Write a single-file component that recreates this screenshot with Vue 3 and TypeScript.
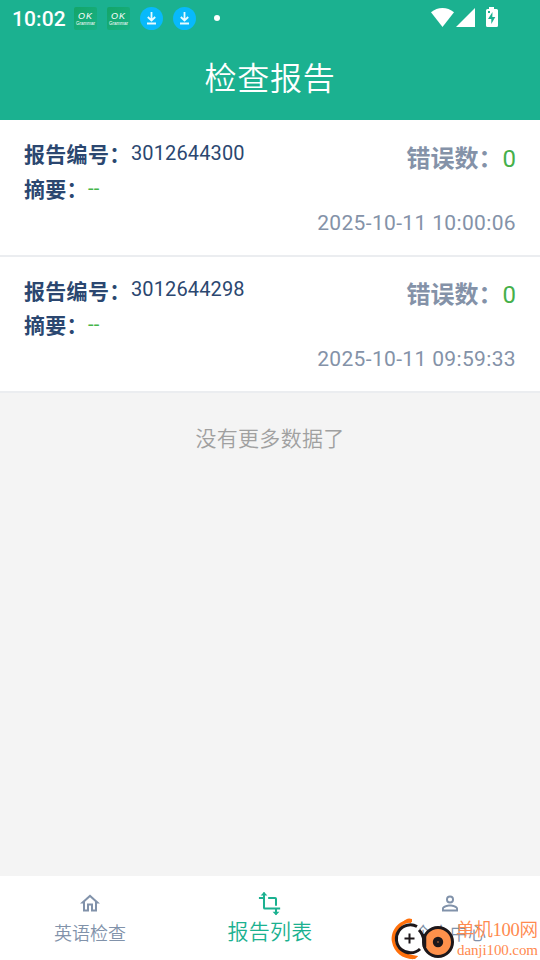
<script setup lang="ts">
interface Report {
  id: string
  summary: string
  errors: number
  time: string
}

const reports: Report[] = [
  { id: '3012644300', summary: '--', errors: 0, time: '2025-10-11 10:00:06' },
  { id: '3012644298', summary: '--', errors: 0, time: '2025-10-11 09:59:33' },
]
</script>

<template>
  <div class="screen">
    <header class="top">
      <div class="status">
        <span class="clock">10:02</span>
        <span v-for="n in 2" :key="'g' + n" class="grammar">
          <b>OK</b>
          <i>Grammar</i>
        </span>
        <svg v-for="n in 2" :key="'d' + n" class="download" viewBox="0 0 23 23">
          <circle cx="11.5" cy="11.5" r="11.5" fill="#08b9fb" />
          <path d="M11.5 5v8M7.8 10l3.7 3.5 3.7-3.5M7 16.5h9" fill="none" stroke="#e9fbff" stroke-width="1.8" />
        </svg>
        <span class="dot"></span>
        <svg class="signals" viewBox="0 0 68 22">
          <path d="M0 5.3C6.7-.4 16.3-.4 23 5.3L11.5 20Z" fill="#fff" />
          <path d="M44 1v19H25Z" fill="#fff" />
          <path d="M58 0h5v2h2.500q1.500 0 1.500 1.500v15q0 1.500-1.500 1.500h-9q-1.500 0-1.500-1.500v-15q0-1.500 1.500-1.500H58Z" fill="#fff" />
          <path d="M61.500 5l-4.500 7h3.300v5l4-7h-3ZM57 4h2v2h-2Z" fill="#1bb190" />
        </svg>
      </div>
      <h1>检查报告</h1>
    </header>

    <main>
      <article v-for="r in reports" :key="r.id" class="report">
        <div class="info">
          <p><strong>报告编号：</strong><span class="number">{{ r.id }}</span></p>
          <p><strong>摘要：</strong><span class="summary">{{ r.summary }}</span></p>
        </div>
        <div class="side">
          <p class="errors"><strong>错误数：</strong><span>{{ r.errors }}</span></p>
          <time>{{ r.time }}</time>
        </div>
      </article>
      <p class="end">没有更多数据了</p>
    </main>

    <nav>
      <a class="tab">
        <svg viewBox="0 0 24 24"><path d="M12 5.690l5 4.500V18h-2v-6H9v6H7v-7.810l5-4.500M12 3 2 12h3v8h6v-6h2v6h6v-8h3L12 3Z" /></svg>
        <span>英语检查</span>
      </a>
      <a class="tab active">
        <svg viewBox="0 0 26 26"><path d="M6.500 1v16.500q0 1 1 1H24M1 7h5.500M11 7h7.500q1 0 1 1v7.500M19.500 18.500V25" fill="none" stroke="currentColor" stroke-width="2.200" /><path d="M2.800 4.300 6.500.500l3.700 3.800ZM15.800 22l3.700 3.800 3.700-3.800Z" /></svg>
        <span>报告列表</span>
      </a>
      <a class="tab">
        <svg viewBox="0 0 24 24"><path d="M12 5.900a2.100 2.100 0 1 1 0 4.200 2.100 2.100 0 0 1 0-4.200m0 9c2.970 0 6.100 1.460 6.100 2.100v1.100H5.900V17c0-.640 3.130-2.100 6.100-2.100M12 4a4 4 0 1 0 0 8 4 4 0 0 0 0-8Zm0 9c-2.670 0-8 1.340-8 4v3h16v-3c0-2.660-5.330-4-8-4Z" /></svg>
        <span>个人中心</span>
      </a>
    </nav>

    <aside class="mark">
      <svg viewBox="0 0 66 44">
        <path d="M22 2C8 3 0 14 2 25c2 11 12 18 23 17l3-3C16 38 6 31 6 21S14 6 22 5Z" fill="#ff700b" />
        <path d="M13 5q4-5 9-3l-1 4ZM16 38l12 1q-4 5-9 2Z" fill="#ff700b" />
        <path d="M28 10A14.500 14.500 0 1 0 31 31L35 20Z" fill="#fff" />
        <path d="M27 9.500A14 14 0 1 0 30 32" fill="none" stroke="#1d171a" stroke-width="3" />
        <path d="M29 13q4 4 5 11" fill="none" stroke="#1d171a" stroke-width="3" />
        <path d="M19.500 16.500v10M14.500 21.500h10" stroke="#1d171a" stroke-width="2" />
        <circle cx="48" cy="25" r="14.500" fill="#ff914b" stroke="#1d171a" stroke-width="3" />
        <circle cx="48" cy="25" r="5.200" fill="#1d171a" />
        <circle cx="48" cy="25" r=".7" fill="#ff914b" />
        <path d="M34.500 17v13" stroke="#1d171a" stroke-width="3.500" />
      </svg>
      <div class="brand"><span>单机100网</span><small>danji100.com</small></div>
    </aside>
  </div>
</template>

<style>
body {
  margin: 0;
}
</style>

<style scoped>
.screen {
  position: relative;
  display: flex;
  flex-direction: column;
  height: 960px;
  background: #f4f4f4;
  overflow: hidden;
  font-family: Roboto, "Noto Sans CJK SC", sans-serif;
}
p, h1 {
  margin: 0;
}
.top {
  height: 120px;
  background: #1bb190;
  color: #fff;
}
.status {
  display: flex;
  align-items: center;
  height: 36px;
  padding-left: 12px;
}
.clock {
  width: 62px;
  font-size: 21px;
  font-weight: 500;
  letter-spacing: 0.1px;
  line-height: 36px;
  padding-top: 2px;
}
.grammar {
  display: flex;
  flex-direction: column;
  align-items: center;
  width: 23px;
  height: 23px;
  margin-right: 10px;
  border-radius: 2px;
  background: linear-gradient(135deg, #14a568, #18b184);
}
.grammar b {
  font: italic 9px/9px "Liberation Sans", sans-serif;
  letter-spacing: 1px;
  margin-top: 5px;
}
.grammar i {
  font: 4.500px/6px "Liberation Sans", sans-serif;
}
.download {
  width: 23px;
  height: 23px;
  margin-right: 10px;
}
.dot {
  width: 6px;
  height: 6px;
  margin-left: 8px;
  border-radius: 50%;
  background: #fff;
}
.signals {
  width: 68px;
  height: 22px;
  margin-left: 211px;
}
h1 {
  font-size: 32px;
  font-weight: 350;
  letter-spacing: 0.800px;
  line-height: 48px;
  padding-top: 19px;
  text-align: center;
}
main {
  flex: 1;
}
.report {
  display: flex;
  justify-content: space-between;
  box-sizing: border-box;
  height: 136.500px;
  padding: 17px 24px 0;
  border-bottom: 2px solid #ebedf0;
  background: #fff;
}
.info p {
  display: flex;
  height: 34.500px;
  color: #2b4770;
}
.info strong {
  font-size: 21px;
  font-weight: 700;
  letter-spacing: 0.300px;
  line-height: 36px;
}
.number {
  margin-top: -0.100px;
  padding-left: 0.500px;
  font-size: 20px;
  letter-spacing: 0.120px;
  line-height: 32px;
}
.info .summary {
  font-size: 20px;
  letter-spacing: 0.300px;
  line-height: 32px;
  color: #45b549;
}
.side {
  display: flex;
  flex-direction: column;
  align-items: flex-end;
  color: #8492a8;
}
.errors {
  display: flex;
  box-sizing: border-box;
  height: 42px;
  padding-top: 0.900px;
  line-height: 42px;
  font-size: 24px;
}
.errors strong {
  font-weight: 700;
}
.errors span {
  color: #45b04a;
}
time {
  margin-top: 28.900px;
  font-size: 21px;
  letter-spacing: 0.350px;
  line-height: 30px;
}
.end {
  padding-top: 30px;
  text-align: center;
  font-size: 21px;
  font-weight: 350;
  letter-spacing: 0.300px;
  line-height: 32px;
  color: #a0a0a0;
}
nav {
  display: flex;
  height: 84px;
  background: #fff;
}
.tab {
  flex: 1;
  display: flex;
  flex-direction: column;
  align-items: center;
  padding-top: 15px;
  color: #8192aa;
  font-size: 18px;
  font-weight: 350;
  line-height: 28px;
}
.tab svg {
  width: 24px;
  height: 25px;
  margin-bottom: 4px;
  fill: currentColor;
}
.active {
  color: #1bb190;
  font-size: 21px;
  letter-spacing: 0.200px;
}
.active svg {
  margin-bottom: 2px;
}
.mark {
  position: absolute;
  left: 390px;
  top: 917px;
  display: flex;
}
.mark svg {
  width: 66px;
  height: 44px;
}
.brand {
  display: flex;
  flex-direction: column;
  color: #ff8a4f;
  font-family: "Liberation Serif", "Noto Sans CJK SC", serif;
  font-size: 18.600px;
  font-weight: 350;
  letter-spacing: -0.300px;
  line-height: 26px;
  white-space: nowrap;
}
.brand small {
  padding-left: 1px;
  font-size: 15px;
  letter-spacing: -0.100px;
  line-height: 14px;
}
</style>
